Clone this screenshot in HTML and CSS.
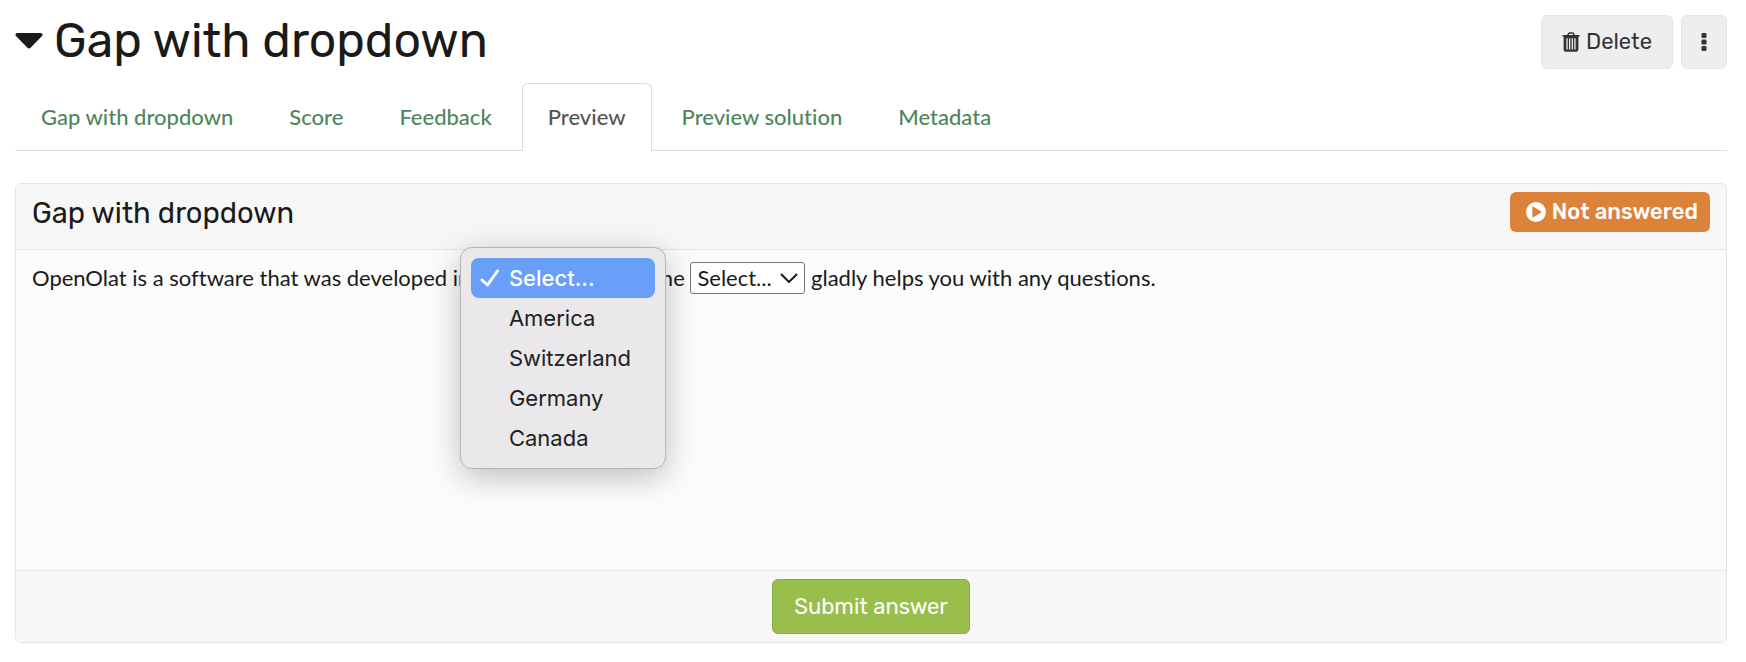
FILE: index.html
```html
<!DOCTYPE html>
<html lang="en">
<head>
<meta charset="utf-8">
<title>Gap with dropdown</title>
<link rel="stylesheet" href="styles.css">
</head>
<body>
<main class="page">
  <header class="page-header">
    <h1 class="page-title">
      <button class="collapse" type="button" aria-label="Collapse" aria-expanded="true">
        <svg class="caret" viewBox="0 0 28 16" aria-hidden="true"><path d="M2 0H26Q28.500 1 27 3L15.800 14.600Q14 16.400 12.200 14.600L1 3Q-.5 1 2 0Z"/></svg>
      </button>
      Gap with dropdown
    </h1>
    <div class="actions">
      <button class="btn btn-default" type="button">
        <svg class="trash" viewBox="0 0 18 20" aria-hidden="true"><path fill-rule="evenodd" d="M5 3L6.200 1Q6.700.2 7.500.2H10.500Q11.300.2 11.800 1L13 3H17.200Q17.800 3 17.800 3.700Q17.800 4.400 17.200 4.400H16.400V17.500Q16.400 19.800 14.200 19.800H3.800Q1.600 19.800 1.600 17.500V4.400H.8Q.2 4.400.2 3.700Q.2 3 .8 3ZM6.700 3H11.300L10.500 1.700H7.500ZM4.400 6.200V17.400H5.700V6.200ZM7 6.200V17.400H8.300V6.200ZM9.700 6.200V17.400H11V6.200ZM12.300 6.200V17.400H13.600V6.200Z"/></svg>
        Delete
      </button>
      <button class="btn btn-default btn-more" type="button" aria-label="More actions">
        <svg class="dots" viewBox="0 0 6 18" aria-hidden="true"><rect x=".5" width="5" height="5" rx="1.300"/><rect x=".5" y="6.500" width="5" height="5" rx="1.300"/><rect x=".5" y="13" width="5" height="5" rx="1.300"/></svg>
      </button>
    </div>
  </header>

  <nav class="tabs" aria-label="Question editor">
    <a class="tab" href="#question">Gap with dropdown</a>
    <a class="tab" href="#score">Score</a>
    <a class="tab" href="#feedback">Feedback</a>
    <a class="tab tab-active" href="#preview" aria-current="page">Preview</a>
    <a class="tab" href="#solution">Preview solution</a>
    <a class="tab" href="#metadata">Metadata</a>
  </nav>

  <section class="panel">
    <header class="panel-header">
      <h2 class="panel-title">Gap with dropdown</h2>
      <span class="status">
        <svg class="play" viewBox="0 0 20 20" aria-hidden="true"><path fill-rule="evenodd" d="M10 0A10 10 0 1 1 10 20A10 10 0 1 1 10 0ZM6.300 5.400V14.600Q6.300 15.800 7.400 15.200L15 10.700Q15.800 10 15 9.300L7.400 4.800Q6.300 4.200 6.300 5.400Z"/></svg>
        Not answered
      </span>
    </header>
    <div class="panel-body">
      <p class="question">OpenOlat is a software that was developed in
        <span class="gap">
          <select class="gap-select gap-country" aria-label="Country">
            <option>Select...</option>
            <option>America</option>
            <option>Switzerland</option>
            <option>Germany</option>
            <option>Canada</option>
          </select>
          <span class="menu" role="listbox" aria-label="Country">
            <span class="menu-item menu-item-active" role="option" aria-selected="true">
              <svg class="check" viewBox="0 0 20 18" aria-hidden="true"><path d="M2 11L7.500 16L17.500 2"/></svg>
              Select...
            </span>
            <span class="menu-item" role="option">America</span>
            <span class="menu-item" role="option">Switzerland</span>
            <span class="menu-item" role="option">Germany</span>
            <span class="menu-item" role="option">Canada</span>
          </span>
        </span>. The
        <span class="gap">
          <select class="gap-select" aria-label="Helper"><option>Select...</option></select>
          <svg class="chevron" viewBox="0 0 18 10" aria-hidden="true"><path d="M1 1L9 9L17 1"/></svg>
        </span>
        gladly helps you with any questions.</p>
    </div>
    <footer class="panel-footer">
      <button class="btn btn-submit" type="submit">Submit answer</button>
    </footer>
  </section>
</main>
</body>
</html>
```
FILE: styles.css
```css
* {
  box-sizing: border-box;
}

body {
  margin: 0;
  background: #fff;
  color: #1a1a1a;
  font: 22px/32px Lato, sans-serif;
  font-variant-ligatures: none;
}

.page {
  padding: 15px 19px 15px 15px;
}

.page-header {
  display: flex;
  justify-content: space-between;
  align-items: flex-start;
  height: 68px;
}

.page-title {
  display: flex;
  align-items: center;
  gap: 11px;
  margin: 0;
  font: 400 48px/52px Rubik, Roboto, sans-serif;
}

.collapse {
  display: flex;
  padding: 0;
  border: 0;
  background: none;
  color: inherit;
}

svg {
  flex: none;
  fill: currentColor;
}

.caret {
  width: 28px;
  height: 16px;
}

.actions {
  display: flex;
  gap: 8px;
}

.btn {
  display: flex;
  align-items: center;
  justify-content: center;
  gap: 6px;
  height: 54px;
  padding: 0 20px;
  border: 1px solid #e6e6e6;
  border-radius: 6px;
  font: 22px/32px Rubik, Roboto, sans-serif;
}

.btn-default {
  background: #eee;
  color: #333;
}

.btn-more {
  width: 46px;
  padding: 0;
}

.trash {
  width: 18px;
  height: 20px;
}

.dots {
  width: 6px;
  height: 18px;
}

.tabs {
  display: flex;
  gap: 4px;
  border-bottom: 1px solid #ddd;
}

.tab {
  height: 67px;
  padding: 17px 25px;
  border: 1px solid transparent;
  border-bottom: 0;
  border-radius: 6px 6px 0 0;
  color: #50865c;
  font-weight: 500;
  text-decoration: none;
}

.tab-active {
  height: 68px;
  margin-bottom: -1px;
  border-color: #ddd;
  background: #fff;
  color: #555;
}

.panel {
  margin-top: 32px;
  border: 1px solid #e5e5e5;
  border-radius: 6px;
  background: #fcfcfc;
}

.panel-header {
  display: flex;
  justify-content: space-between;
  align-items: flex-start;
  height: 66px;
  padding: 8px 16px;
  border-bottom: 1px solid #e5e5e5;
  border-radius: 5px 5px 0 0;
  background: #f7f7f7;
}

.panel-title {
  margin: 0;
  padding-top: 5px;
  font: 400 29px/32px Rubik, Roboto, sans-serif;
}

.status {
  display: flex;
  align-items: center;
  gap: 6px;
  height: 40px;
  padding: 0 12px 0 16px;
  border-radius: 6px;
  background: #dd8239;
  color: #fff;
  font: 500 22px/32px Rubik, Roboto, sans-serif;
}

.play {
  width: 20px;
  height: 20px;
}

.panel-body {
  min-height: 320px;
  padding: 12px 16px;
}

.question {
  margin: 0;
}

.gap {
  display: inline-block;
  position: relative;
}

.gap-select {
  width: 115px;
  height: 32px;
  padding: 0 6px;
  border: 1px solid #767676;
  border-radius: 3px;
  background: #fff;
  color: inherit;
  font: inherit;
  line-height: 28px;
  appearance: none;
}

.gap-country {
  width: 162px;
}

.chevron {
  position: absolute;
  top: 11px;
  right: 7px;
  width: 18px;
  height: 10px;
  fill: none;
  stroke: currentColor;
  stroke-width: 2;
  pointer-events: none;
}

.menu {
  position: absolute;
  top: -15px;
  left: -16px;
  z-index: 1;
  width: 206px;
  padding: 10px;
  border: 1px solid #b5b3b6;
  border-radius: 12px;
  background: #eae8eb;
  box-shadow: 0 8px 32px rgba(0, 0, 0, .25);
  color: #222;
  font: 22px/40px Inter, sans-serif;
}

.menu-item {
  display: flex;
  align-items: center;
  gap: 9px;
  height: 40px;
  padding-left: 38px;
}

.menu-item-active {
  padding-left: 9px;
  border-radius: 8px;
  background: #679ff9;
  color: #fff;
  font-weight: 500;
}

.check {
  width: 20px;
  height: 18px;
  fill: none;
  stroke: currentColor;
  stroke-width: 3;
  stroke-linecap: round;
  stroke-linejoin: round;
}

.panel-footer {
  display: flex;
  justify-content: center;
  padding: 8px;
  border-top: 1px solid #e5e5e5;
  border-radius: 0 0 5px 5px;
  background: #f7f7f7;
}

.btn-submit {
  height: 55px;
  padding: 0 21px;
  border-color: #88ab3f;
  background: #99be4c;
  color: #fff;
}
```
